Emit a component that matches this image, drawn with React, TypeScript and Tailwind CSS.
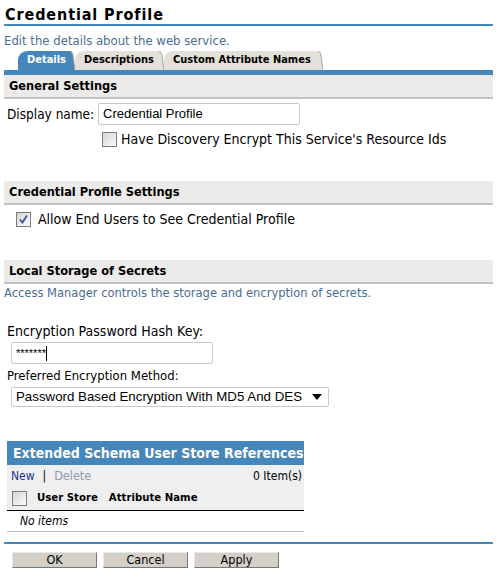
import React from 'react';

const ui = { fontFamily: '"DejaVu Sans Condensed", "DejaVu Sans", Verdana, sans-serif' };
const arial = { fontFamily: '"Liberation Sans", Arial, sans-serif' };

function Box({ checked = false }: { checked?: boolean }) {
  return (
    <span className="relative inline-block w-[15px] h-[15px] border border-[#7d7d7d] bg-gradient-to-br from-[#d6d6d6] to-[#fbfbfb] shrink-0">
      {checked && (
        <svg className="absolute left-[1px] top-[1px]" width="11" height="11" viewBox="0 0 11 11">
          <path d="M2 5.5 L4.5 8.5 L9 1.5" fill="none" stroke="#3d4fa0" strokeWidth="1.8" />
        </svg>
      )}
    </span>
  );
}

function SectionHead({ title }: { title: string }) {
  return (
    <div className="h-[24px] bg-[#ecebe9] border-b-2 border-[#c3c3c3] pl-[5px] flex items-center text-[12.7px] font-bold text-black">
      {title}
    </div>
  );
}

function Tab({ label, width, active = false }: { label: string; width: string; active?: boolean }) {
  return (
    <div className="flex items-end h-[19px]">
      <div
        className={`${width} h-[19px] pl-[9px] flex items-center text-[11px] font-bold rounded-tl-[9px] whitespace-nowrap ${
          active ? 'bg-[#4687bb] text-white' : 'bg-[#e3e0da] text-black'
        }`}
      >
        {label}
      </div>
      <svg width="8" height="19" viewBox="0 0 8 19" className="-ml-px">
        <path d="M0 0 L3 0 Q5 0 6 4 L8 19 L0 19 Z" fill={active ? '#4687bb' : '#e3e0da'} />
        <path d="M3 0 Q5 0 6 4 L8 19" fill="none" stroke="#a9a7a2" strokeWidth="1" />
      </svg>
    </div>
  );
}

export default function App() {
  return (
    <div className="w-[499px] h-[577px] bg-white overflow-hidden text-black" style={ui}>
      <div className="px-[4px] pr-[6px]">
        {/* Title */}
        <h1 className="pt-[5px] pl-[1px] text-[16px] font-bold tracking-[0.9px] leading-[19px] border-b-[2px] border-[#4687bb]">
          Credential Profile
        </h1>
        <p className="mt-[7px] text-[13px] leading-[16px] text-[#4b6d93]">Edit the details about the web service.</p>

        {/* Tabs */}
        <div className="mt-[2px] flex pl-[14px]">
          <Tab label="Details" width="w-[50px]" active />
          <Tab label="Descriptions" width="w-[82px]" />
          <Tab label="Custom Attribute Names" width="w-[152px]" />
        </div>
        <div className="h-[5px] bg-[#4687bb]" />

        <SectionHead title="General Settings" />
        <div className="flex items-center mt-[4px] pl-[3px] text-[13.5px]">
          <span className="w-[91px] whitespace-nowrap">Display name:</span>
          <div className="w-[202px] h-[22px] border border-[#c9c9c9] rounded-[2px] px-[4px] flex items-center text-[13px]" style={arial}>
            Credential Profile
          </div>
        </div>
        <div className="flex items-center gap-[4px] mt-[6px] h-[16px] pl-[98px] text-[14px]">
          <Box />
          <span>Have Discovery Encrypt This Service's Resource Ids</span>
        </div>

        <div className="mt-[34px]">
          <SectionHead title="Credential Profile Settings" />
        </div>
        <div className="flex items-center gap-[7px] mt-[6px] h-[16px] pl-[12px] text-[14px]">
          <Box checked />
          <span>Allow End Users to See Credential Profile</span>
        </div>

        <div className="mt-[33px]">
          <SectionHead title="Local Storage of Secrets" />
        </div>
        <p className="mt-[1px] text-[12.8px] leading-[16px] text-[#4b6d93]">Access Manager controls the storage and encryption of secrets.</p>

        <div className="mt-[22px] pl-[3px] text-[14px] leading-[16px]">Encryption Password Hash Key:</div>
        <div className="mt-[3px] ml-[7px] w-[202px] h-[22px] border border-[#c9c9c9] rounded-[2px] px-[4px] flex items-center text-[11px]" style={arial}>
          *******<span className="inline-block w-px h-[15px] bg-black" />
        </div>
        <div className="mt-[4px] pl-[3px] text-[13px] leading-[16px]">Preferred Encryption Method:</div>
        <div className="mt-[3px] ml-[7px] w-[318px] h-[20px] border border-[#c9c9c9] rounded-[2px] pl-[4px] pr-[6px] flex items-center justify-between text-[13.3px]" style={arial}>
          <span>Password Based Encryption With MD5 And DES</span>
          <svg width="10" height="6" viewBox="0 0 10 6"><path d="M0 0 L10 0 L5 6 Z" fill="#000" /></svg>
        </div>

        {/* Table */}
        <div className="mt-[34px] ml-[3px] w-[297px]">
          <div className="h-[24px] bg-[#4687bb] text-white text-[14px] font-bold pl-[6px] flex items-center whitespace-nowrap overflow-hidden">
            Extended Schema User Store References
          </div>
          <div className="bg-[#efefef] text-[12px]">
            <div className="h-[22px] flex items-center justify-between pl-[4px] pr-[2px]">
              <span>
                <span className="text-[#1e2f8e]">New</span>
                <span className="mx-[8px]">|</span>
                <span className="text-[#8d9bab] text-[12.5px]">Delete</span>
              </span>
              <span>0 Item(s)</span>
            </div>
            <div className="h-[24px] flex items-center gap-[10px] pl-[5px] border-b-[1px] border-black font-bold text-[11.3px]">
              <Box />
              <span>User Store</span>
              <span className="ml-[1px]">Attribute Name</span>
            </div>
          </div>
          <div className="h-[21px] pl-[13px] flex items-center italic text-[12px] border-b-[1px] border-[#bdbdbd]">No items</div>
        </div>

        <div className="mt-[10px] h-[2px] bg-[#4687bb]" />
        <div className="mt-[8px] flex gap-[6px] pl-[8px] text-[12.5px]">
          {['OK', 'Cancel', 'Apply'].map((b) => (
            <div key={b} className="w-[85px] h-[16px] bg-[#d4d0c8] border border-[#777] border-t-[#e8e8e8] border-l-[#e8e8e8] flex items-center justify-center">
              {b}
            </div>
          ))}
        </div>
      </div>
    </div>
  );
}
